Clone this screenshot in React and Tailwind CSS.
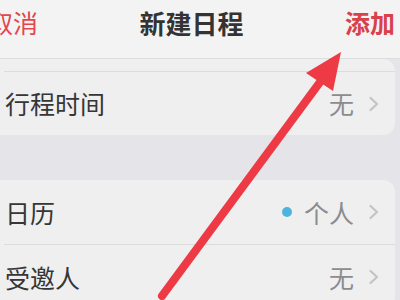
import React from "react";

const font = { fontFamily: '"Noto Sans CJK SC", "Noto Sans", sans-serif' };

function Chevron() {
  return (
    <svg width="11" height="16" viewBox="0 0 11 16" className="shrink-0">
      <path d="M2.5 2 L9 8 L2.5 14" fill="none" stroke="#c3c3c6" strokeWidth="2.2" strokeLinecap="round" strokeLinejoin="round" />
    </svg>
  );
}

function Row({ label, value, dot, h }) {
  return (
    <div className={`flex items-center justify-between pl-[15px] pr-[16px] ${h}`}>
      <span className="text-[25px] text-[#363636] leading-none">{label}</span>
      <div className="flex items-center">
        {dot && <span className="w-[10px] h-[10px] rounded-full bg-[#4db4dd] mr-[12px]" />}
        <span className="text-[25px] text-[#8c8c90] leading-none mr-[14px]">{value}</span>
        <Chevron />
      </div>
    </div>
  );
}

export default function App() {
  return (
    <div className="relative w-[400px] h-[300px] overflow-hidden bg-[#e5e4e9]" style={font}>
      <div className="h-[59px] bg-[#f3f3f3] border-b border-[#dddddd]">
        <div className="h-[45px] flex items-center justify-between ml-[-12px] mr-[5px]">
          <span className="text-[25px] text-[#e4464e] leading-none">取消</span>
          <span className="text-[26px] font-semibold text-[#333333] leading-none">新建日程</span>
          <span className="text-[25px] font-semibold text-[#d9404a] leading-none">添加</span>
        </div>
      </div>

      <div className="ml-[-10px] w-[405px] bg-[#efefef] rounded-r-[12px]">
        <div className="h-[12px]" />
        <div className="ml-[14px] border-t border-[#dcdcdc]" />
        <Row label="行程时间" value="无" h="h-[63px]" />
      </div>

      <div className="h-[45px]" />

      <div className="ml-[-10px] w-[405px] bg-[#efefef] rounded-r-[12px]">
        <Row label="日历" value="个人" dot h="h-[64px]" />
        <div className="ml-[14px] border-t border-[#dcdcdc]" />
        <Row label="受邀人" value="无" h="h-[64px]" />
      </div>

      <svg className="absolute inset-0 pointer-events-none" width="400" height="300" viewBox="0 0 400 300">
        <line x1="162" y1="296" x2="326" y2="74" stroke="#ee3a44" strokeWidth="8" strokeLinecap="round" />
        <polygon points="341,52 306,73 333,91" fill="#ee3a44" />
      </svg>
    </div>
  );
}
